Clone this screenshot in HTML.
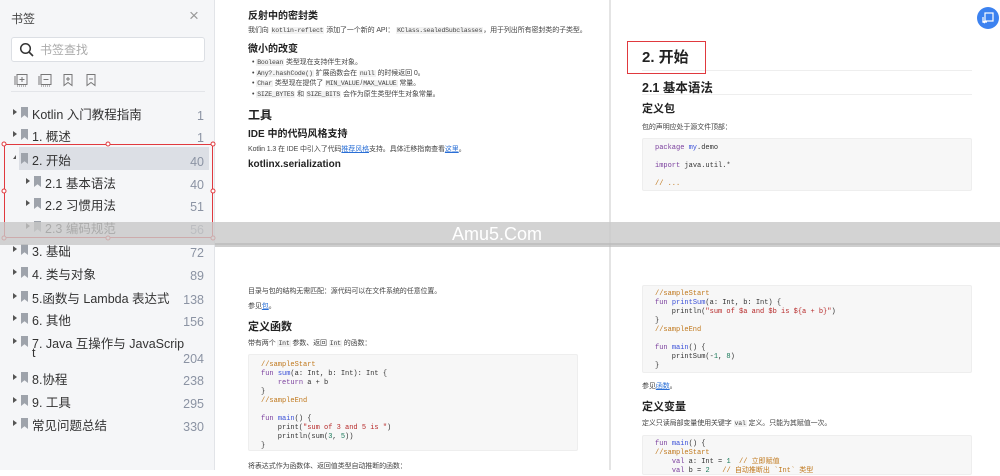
<!DOCTYPE html>
<html><head><meta charset="utf-8"><style>
*{margin:0;padding:0;box-sizing:border-box}
body{width:1000px;height:470px;overflow:hidden;background:#fff;font-family:"Liberation Sans","Noto Sans CJK SC",sans-serif;position:relative;color:#333}
.a{position:absolute;white-space:nowrap}
#sb{position:absolute;left:0;top:0;width:215px;height:470px;background:#f5f6f8;border-right:1px solid #e2e4e8}
.it{position:absolute;left:0;width:215px;font-size:12.5px;color:#333}
.it .t{position:absolute;left:13px;width:0;height:0;border-top:3.5px solid transparent;border-bottom:3.5px solid transparent;border-left:4px solid #555}
.it .bm{position:absolute;width:7px;height:11px;background:#9ea3ab;clip-path:polygon(0 0,100% 0,100% 100%,50% 75%,0 100%)}
.it .n{position:absolute;right:11px;color:#8b93a3;font-size:12.5px}
.code{position:absolute;background:#f7f7f7;border:1px solid #eee;border-radius:2px;font-family:"Liberation Mono",monospace;font-size:7px;line-height:9px;padding:6px 12px;white-space:pre;color:#333}
.k{color:#7a3e9d}.f{color:#3a50d8}.c{color:#c0781c}.s{color:#b72a2a}.nu{color:#1a7a5a}
.p{font-size:7px;color:#444;letter-spacing:-0.1px}
.ic{background:#f2f2f2;font-family:"Liberation Mono",monospace;padding:0 1px;font-size:6.5px;letter-spacing:-0.2px}
.h4{font-size:10px;font-weight:bold;color:#222}
</style></head><body>
<div id="sb">
 <div class="a" style="left:11px;top:10px;font-size:12px;color:#444">书签</div>
 <div class="a" style="left:189px;top:6px;font-size:17px;color:#999;font-weight:300">×</div>
 <div class="a" style="left:11px;top:37px;width:194px;height:25px;background:#fff;border:1px solid #dcdfe4;border-radius:3px"></div>
 <svg class="a" style="left:19px;top:42px" width="16" height="16"><circle cx="6.5" cy="6.5" r="4.8" fill="none" stroke="#333" stroke-width="1.5"/><path d="M10 10l4 4" stroke="#333" stroke-width="1.6"/></svg>
 <div class="a" style="left:40px;top:41px;font-size:12px;color:#aaa">书签查找</div>
 <svg class="a" style="left:14px;top:73px" width="90" height="14" fill="none" stroke="#777" stroke-width="1">
  <rect x="3" y="1.5" width="10" height="10"/><path d="M8 4v5M5.5 6.5h5M1 3v9" /><path d="M3 13h10" stroke-dasharray="1 1"/>
  <rect x="27" y="1.5" width="10" height="10"/><path d="M29.5 6.5h5M25 3v9"/><path d="M27 13h10" stroke-dasharray="1 1"/>
  <path d="M50 1.5h8v11l-4-3-4 3z"/><path d="M54 4v4M52 6h4"/>
  <path d="M73 1.5h8v11l-4-3-4 3z"/><path d="M75 6h4"/>
 </svg>
 <div class="a" style="left:11px;top:91px;width:194px;height:1px;background:#e3e5e9"></div>
 <div class="a" style="left:19px;top:147px;width:190px;height:23px;background:#dcdfe5"></div>

 <div class="it" style="top:104px"><i class="t" style="top:5px"></i><i class="bm" style="left:21px;top:3px"></i><span class="a" style="left:32px;top:0">Kotlin 入门教程指南</span><span class="n" style="top:5px">1</span></div>
 <div class="it" style="top:126px"><i class="t" style="top:5px"></i><i class="bm" style="left:21px;top:3px"></i><span class="a" style="left:32px;top:0">1. 概述</span><span class="n" style="top:5px">1</span></div>
 <div class="it" style="top:150px"><i class="t" style="top:5px;border:none;border-left:3.5px solid transparent;border-bottom:4px solid #555;width:0"></i><i class="bm" style="left:21px;top:3px"></i><span class="a" style="left:32px;top:0">2. 开始</span><span class="n" style="top:5px">40</span></div>
 <div class="it" style="top:173px"><i class="t" style="left:26px;top:5px"></i><i class="bm" style="left:34px;top:3px"></i><span class="a" style="left:45px;top:0">2.1 基本语法</span><span class="n" style="top:5px">40</span></div>
 <div class="it" style="top:195px"><i class="t" style="left:26px;top:5px"></i><i class="bm" style="left:34px;top:3px"></i><span class="a" style="left:45px;top:0">2.2 习惯用法</span><span class="n" style="top:5px">51</span></div>
 <div class="it" style="top:218px"><i class="t" style="left:26px;top:5px"></i><i class="bm" style="left:34px;top:3px"></i><span class="a" style="left:45px;top:0">2.3 编码规范</span><span class="n" style="top:5px">56</span></div>
 <div class="it" style="top:241px"><i class="t" style="top:5px"></i><i class="bm" style="left:21px;top:3px"></i><span class="a" style="left:32px;top:0">3. 基础</span><span class="n" style="top:5px">72</span></div>
 <div class="it" style="top:264px"><i class="t" style="top:5px"></i><i class="bm" style="left:21px;top:3px"></i><span class="a" style="left:32px;top:0">4. 类与对象</span><span class="n" style="top:5px">89</span></div>
 <div class="it" style="top:288px"><i class="t" style="top:5px"></i><i class="bm" style="left:21px;top:3px"></i><span class="a" style="left:32px;top:0">5.函数与 Lambda 表达式</span><span class="n" style="top:5px">138</span></div>
 <div class="it" style="top:310px"><i class="t" style="top:5px"></i><i class="bm" style="left:21px;top:3px"></i><span class="a" style="left:32px;top:0">6. 其他</span><span class="n" style="top:5px">156</span></div>
 <div class="it" style="top:333px"><i class="t" style="top:5px"></i><i class="bm" style="left:21px;top:3px"></i><span class="a" style="left:32px;top:0">7. Java 互操作与 JavaScrip</span><span class="a" style="left:32px;top:13px">t</span><span class="n" style="top:19px">204</span></div>
 <div class="it" style="top:369px"><i class="t" style="top:5px"></i><i class="bm" style="left:21px;top:3px"></i><span class="a" style="left:32px;top:0">8.协程</span><span class="n" style="top:5px">238</span></div>
 <div class="it" style="top:392px"><i class="t" style="top:5px"></i><i class="bm" style="left:21px;top:3px"></i><span class="a" style="left:32px;top:0">9. 工具</span><span class="n" style="top:5px">295</span></div>
 <div class="it" style="top:415px"><i class="t" style="top:5px"></i><i class="bm" style="left:21px;top:3px"></i><span class="a" style="left:32px;top:0">常见问题总结</span><span class="n" style="top:5px">330</span></div>
</div>

<div class="a" style="left:4px;top:144px;width:209px;height:94px;border:1px solid #e0393e"></div>
<svg class="a" style="left:0;top:140px" width="220" height="102"><g fill="#fff" stroke="#e0393e" stroke-width="1">
<circle cx="4" cy="4" r="2"/><circle cx="108" cy="4" r="2"/><circle cx="213" cy="4" r="2"/><circle cx="4" cy="51" r="2"/><circle cx="213" cy="51" r="2"/><circle cx="4" cy="98" r="2"/><circle cx="108" cy="98" r="2"/><circle cx="213" cy="98" r="2"/></g></svg>

<div class="a" style="left:609px;top:0;width:2px;height:470px;background:#e4e4e4"></div>

<div class="a h4" style="left:248px;top:7px">反射中的密封类</div>
<div class="a p" style="left:248px;top:25px">我们向 <span class="ic">kotlin-reflect</span> 添加了一个新的 API： <span class="ic">KClass.sealedSubclasses</span>，用于列出所有密封类的子类型。</div>
<div class="a h4" style="left:248px;top:40px">微小的改变</div>
<div class="a p" style="left:252px;top:58px;line-height:10.5px">• <span class="ic">Boolean</span> 类型现在支持伴生对象。<br>• <span class="ic">Any?.hashCode()</span> 扩展函数会在 <span class="ic">null</span> 的时候返回 0。<br>• <span class="ic">Char</span> 类型现在提供了 <span class="ic">MIN_VALUE</span>/<span class="ic">MAX_VALUE</span> 常量。<br>• <span class="ic">SIZE_BYTES</span> 和 <span class="ic">SIZE_BITS</span> 会作为原生类型伴生对象常量。</div>
<div class="a" style="left:248px;top:106px;font-size:12px;font-weight:bold;color:#222">工具</div>
<div class="a h4" style="left:248px;top:125px">IDE 中的代码风格支持</div>
<div class="a p" style="left:248px;top:144px">Kotlin 1.3 在 IDE 中引入了代码<span style="color:#2a6fd6;text-decoration:underline">推荐风格</span>支持。具体迁移指南查看<span style="color:#2a6fd6;text-decoration:underline">这里</span>。</div>
<div class="a h4" style="left:248px;top:159px">kotlinx.serialization</div>

<div class="a" style="left:642px;top:70px;width:330px;height:1px;background:#eee"></div>
<div class="a" style="left:642px;top:94px;width:330px;height:1px;background:#eee"></div>
<div class="a" style="left:642px;top:46px;font-size:15px;font-weight:bold;color:#222">2. 开始</div>
<div class="a" style="left:627px;top:41px;width:79px;height:33px;border:1.5px solid #e0393e"></div>
<div class="a" style="left:642px;top:77px;font-size:12.5px;font-weight:bold;color:#222">2.1 基本语法</div>
<div class="a" style="left:642px;top:100px;font-size:11px;font-weight:bold;color:#222">定义包</div>
<div class="a p" style="left:642px;top:122px">包的声明应处于源文件顶部：</div>
<div class="code" style="left:642px;top:138px;width:330px;height:53px;line-height:9px;padding-top:5px"><span class="k">package</span> <span class="f">my</span>.demo

<span class="k">import</span> java.util.*

<span class="c">// ...</span></div>
<div class="a" style="left:977px;top:7px;width:22px;height:22px;border-radius:50%;background:#3c82f0"></div>
<svg class="a" style="left:982px;top:12px" width="12" height="12" fill="none" stroke="#fff" stroke-width="1.2"><rect x="3" y="1" width="8" height="8"/><path d="M1 5v5h4M3 11l-2-1 2-1"/></svg>

<div class="a" style="left:0;top:222px;width:1000px;height:23px;background:rgba(200,200,200,0.8)"></div>
<div class="a" style="left:215px;top:243px;width:785px;height:4px;background:rgba(185,185,185,0.7)"></div>
<div class="a" style="left:452px;top:224px;font-size:18px;color:#fff">Amu5.Com</div>

<div class="a p" style="left:248px;top:286px">目录与包的结构无需匹配：源代码可以在文件系统的任意位置。</div>
<div class="a p" style="left:248px;top:301px">参见<span style="color:#2a6fd6;text-decoration:underline">包</span>。</div>
<div class="a" style="left:248px;top:318px;font-size:11px;font-weight:bold;color:#222">定义函数</div>
<div class="a p" style="left:248px;top:338px">带有两个 <span class="ic">Int</span> 参数、返回 <span class="ic">Int</span> 的函数：</div>
<div class="code" style="left:248px;top:354px;width:330px;height:97px"><span class="c">//sampleStart</span>
<span class="k">fun</span> <span class="f">sum</span>(a: Int, b: Int): Int {
    <span class="k">return</span> a + b
}
<span class="c">//sampleEnd</span>

<span class="k">fun</span> <span class="f">main</span>() {
    print(<span class="s">"sum of 3 and 5 is "</span>)
    println(sum(<span class="nu">3</span>, <span class="nu">5</span>))
}</div>
<div class="a p" style="left:248px;top:461px">将表达式作为函数体、返回值类型自动推断的函数：</div>

<div class="code" style="left:642px;top:285px;width:330px;height:88px;padding-top:4px"><span class="c">//sampleStart</span>
<span class="k">fun</span> <span class="f">printSum</span>(a: Int, b: Int) {
    println(<span class="s">"sum of $a and $b is ${a + b}"</span>)
}
<span class="c">//sampleEnd</span>

<span class="k">fun</span> <span class="f">main</span>() {
    printSum(-<span class="nu">1</span>, <span class="nu">8</span>)
}</div>
<div class="a p" style="left:642px;top:381px">参见<span style="color:#2a6fd6;text-decoration:underline">函数</span>。</div>
<div class="a" style="left:642px;top:398px;font-size:11px;font-weight:bold;color:#222">定义变量</div>
<div class="a p" style="left:642px;top:418px">定义只读局部变量使用关键字 <span class="ic">val</span> 定义。只能为其赋值一次。</div>
<div class="code" style="left:642px;top:435px;width:330px;height:40px;padding-top:4px"><span class="k">fun</span> <span class="f">main</span>() {
<span class="c">//sampleStart</span>
    <span class="k">val</span> a: Int = <span class="nu">1</span>  <span class="c">// 立即赋值</span>
    <span class="k">val</span> b = <span class="nu">2</span>   <span class="c">// 自动推断出 `Int` 类型</span></div>
</body></html>
